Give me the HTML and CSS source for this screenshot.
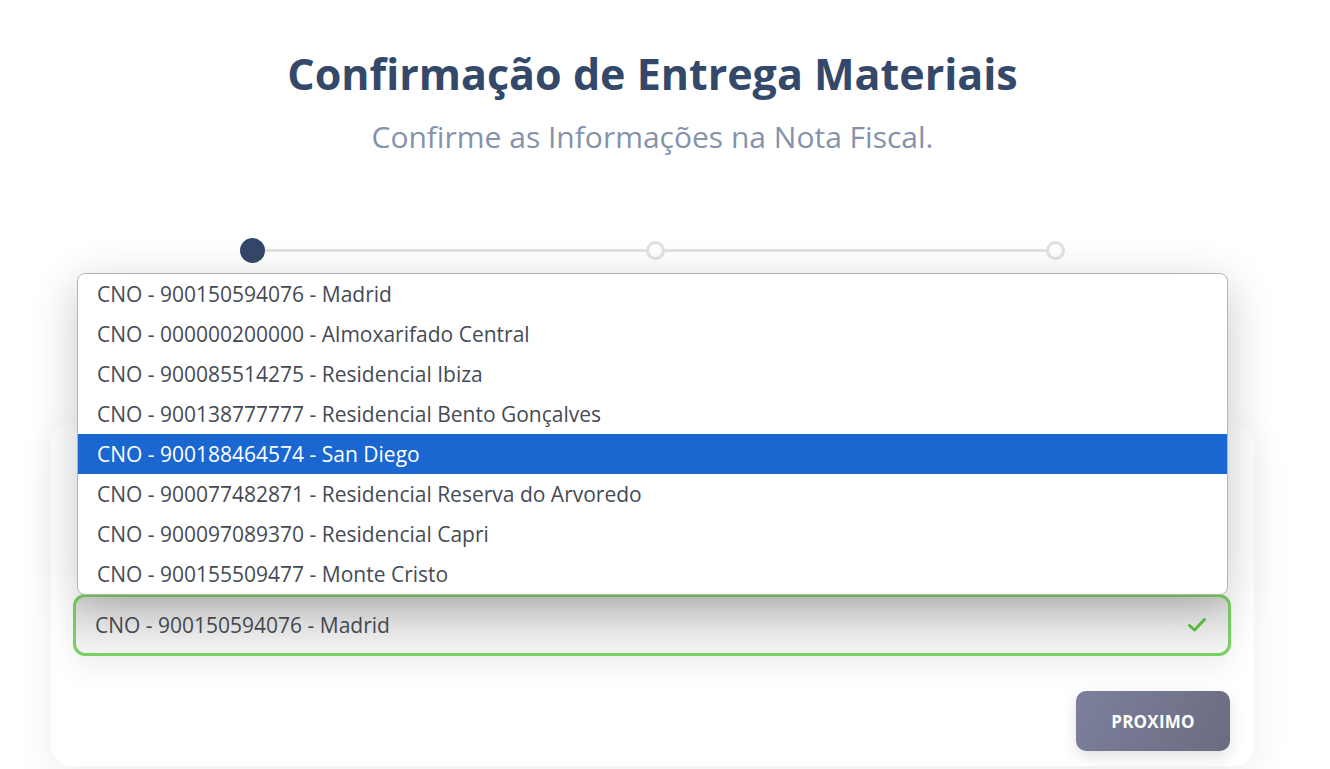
FILE: index.html
```html
<!DOCTYPE html>
<html lang="pt-BR">
<head>
<meta charset="utf-8">
<title>Confirmação de Entrega Materiais</title>
<link rel="stylesheet" href="styles.css">
</head>
<body>
<main class="page">
  <header class="head">
    <h1 class="title">Confirmação de Entrega Materiais</h1>
    <p class="subtitle">Confirme as Informações na Nota Fiscal.</p>
    <div class="stepper">
      <span class="step step-active"></span>
      <span class="step-line"></span>
      <span class="step"></span>
      <span class="step-line"></span>
      <span class="step"></span>
    </div>
  </header>
  <section class="card">
    <div class="field">
      <ul class="listbox">
        <li class="option">CNO - 900150594076 - Madrid</li>
        <li class="option">CNO - 000000200000 - Almoxarifado Central</li>
        <li class="option">CNO - 900085514275 - Residencial Ibiza</li>
        <li class="option">CNO - 900138777777 - Residencial Bento Gonçalves</li>
        <li class="option option-hover">CNO - 900188464574 - San Diego</li>
        <li class="option">CNO - 900077482871 - Residencial Reserva do Arvoredo</li>
        <li class="option">CNO - 900097089370 - Residencial Capri</li>
        <li class="option">CNO - 900155509477 - Monte Cristo</li>
      </ul>
      <div class="select">
        <span class="select-value">CNO - 900150594076 - Madrid</span>
        <svg class="check" width="20" height="16" viewBox="0 0 20 16"><path d="M2.5 8.5 L7.5 13 L17.5 2.5" fill="none" stroke="#5cbf3f" stroke-width="3" stroke-linecap="round" stroke-linejoin="round"/></svg>
      </div>
    </div>
    <div class="actions">
      <button class="btn-next" type="button">PROXIMO</button>
    </div>
  </section>
</main>
</body>
</html>
```
FILE: styles.css
```css
* { box-sizing: border-box; }
html, body { margin: 0; padding: 0; background: #ffffff; }
body {
  font-family: "Open Sans", "Noto Sans", sans-serif;
  width: 1330px;
  height: 769px;
  overflow: hidden;
}
.page {
  width: 1305px;
  display: flex;
  flex-direction: column;
}
.head {
  padding-top: 48px;
  display: flex;
  flex-direction: column;
  align-items: center;
}
.title {
  margin: 0;
  font-size: 43px;
  line-height: 52px;
  font-weight: 700;
  color: #34486a;
}
.subtitle {
  margin: 18px 0 0;
  font-size: 30px;
  line-height: 38px;
  font-weight: 400;
  color: #8393ab;
}
.stepper {
  width: 825px;
  display: flex;
  align-items: center;
  height: 25px;
  margin-top: 82px;
}
.step {
  width: 19px;
  height: 19px;
  border-radius: 50%;
  border: 3px solid #dfe1e5;
  background: #ffffff;
  flex: none;
}
.step-active {
  width: 25px;
  height: 25px;
  border: none;
  background: #33476a;
}
.step-line {
  flex: 1;
  height: 3px;
  background: #e0e2e6;
}
.card {
  margin-top: 160px;
  margin-left: 51px;
  width: 1203px;
  background: #ffffff;
  border-radius: 20px;
  box-shadow: 0 10px 40px rgba(0, 0, 0, 0.07);
  padding: 171px 23px 15px 22px;
  display: flex;
  flex-direction: column;
}
.field {
  position: relative;
}
.listbox {
  position: absolute;
  left: 4px;
  right: 3px;
  bottom: calc(100% - 1px);
  margin: 0;
  padding: 0;
  list-style: none;
  background: #ffffff;
  border: 1px solid #b5b5b5;
  border-radius: 8px;
  overflow: hidden;
  box-shadow: 0 12px 45px rgba(0, 0, 0, 0.22);
  z-index: 2;
}
.option {
  height: 40px;
  line-height: 40px;
  padding-left: 19px;
  font-size: 21px;
  color: #454b55;
}
.option-hover {
  background: #1a67d2;
  color: #ffffff;
}
.select {
  height: 62px;
  border: 3px solid #79d063;
  border-radius: 12px;
  background: linear-gradient(180deg, #dadada 0%, #e9e9e9 50%, #f3f3f3 100%);
  box-shadow: 0 10px 30px rgba(0, 0, 0, 0.08);
  display: flex;
  align-items: center;
  justify-content: space-between;
  padding: 0 21px 0 19px;
}
.select-value {
  font-size: 21px;
  color: #474c54;
}
.check { display: block; }
.actions {
  margin-top: 35px;
  display: flex;
  justify-content: flex-end;
  padding-right: 1px;
}
.btn-next {
  width: 154px;
  height: 60px;
  border: none;
  border-radius: 10px;
  background: linear-gradient(120deg, #7d809d 0%, #6b6c80 100%);
  box-shadow: 0 6px 16px rgba(0, 0, 0, 0.12);
  color: #ffffff;
  font-family: "Open Sans", "Noto Sans", sans-serif;
  font-weight: 700;
  font-size: 17px;
  letter-spacing: 0.2px;
}
```
